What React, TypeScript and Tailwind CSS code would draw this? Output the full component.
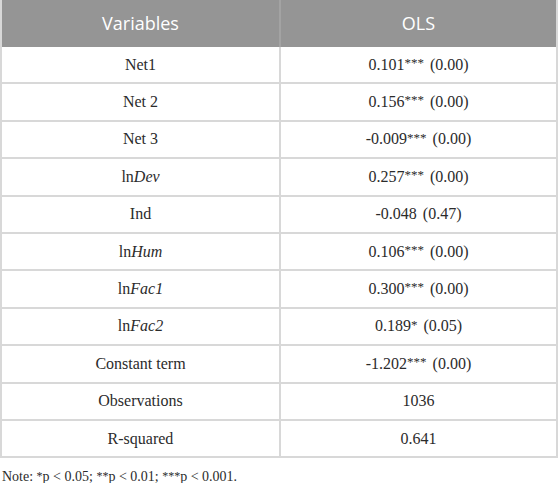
import React from "react";

const rows: [React.ReactNode, string][] = [
  ["Net1", "0.101*** (0.00)"],
  ["Net 2", "0.156*** (0.00)"],
  ["Net 3", "-0.009*** (0.00)"],
  [<>ln<i>Dev</i></>, "0.257*** (0.00)"],
  ["Ind", "-0.048 (0.47)"],
  [<>ln<i>Hum</i></>, "0.106*** (0.00)"],
  [<>ln<i>Fac1</i></>, "0.300*** (0.00)"],
  [<>ln<i>Fac2</i></>, "0.189* (0.05)"],
  ["Constant term", "-1.202*** (0.00)"],
  ["Observations", "1036"],
  ["R-squared", "0.641"],
];

function Val({ v }: { v: string }) {
  const m = v.match(/^([^*\s]+)(\**)(?:\s(.*))?$/);
  if (!m) return <>{v}</>;
  return (
    <>
      {m[1]}
      {m[2] && <span className="relative top-[-2px] text-[13px]">{m[2]}</span>}
      {m[3] && <span className="ml-[6px]">{m[3]}</span>}
    </>
  );
}

export default function App() {
  return (
    <div className="w-[558px] h-[483px] bg-white">
      <div className="border-x-2 border-[#d8d8d8]">
        <div className="grid grid-cols-[277px_2px_1fr] h-[47px] bg-[#959595] text-white text-[18px] font-['Open_Sans',sans-serif]">
          <div className="flex items-center justify-center pb-[1px]">Variables</div>
          <div className="bg-[#a3a3a3]" />
          <div className="flex items-center justify-center pb-[1px]">OLS</div>
        </div>
        {rows.map(([a, b], i) => (
          <div
            key={i}
            className="grid grid-cols-[277px_2px_1fr] h-[37.4px] border-b-2 border-[#d8d8d8] text-[16px] text-[#2b2b2b] font-['Liberation_Serif',serif]"
          >
            <div className="flex items-center justify-center">{a}</div>
            <div className="bg-[#d8d8d8]" />
            <div className="flex items-center justify-center">
              <Val v={b} />
            </div>
          </div>
        ))}
      </div>
      <div className="pt-[10px] pl-[2px] text-[14px] leading-[18px] text-[#2b2b2b] font-['Liberation_Serif',serif]">
        Note: <span className="relative top-[-1px] text-[12px]">*</span>p &lt; 0.05; <span className="relative top-[-1px] text-[12px]">**</span>p &lt; 0.01; <span className="relative top-[-1px] text-[12px]">***</span>p &lt; 0.001.
      </div>
    </div>
  );
}
